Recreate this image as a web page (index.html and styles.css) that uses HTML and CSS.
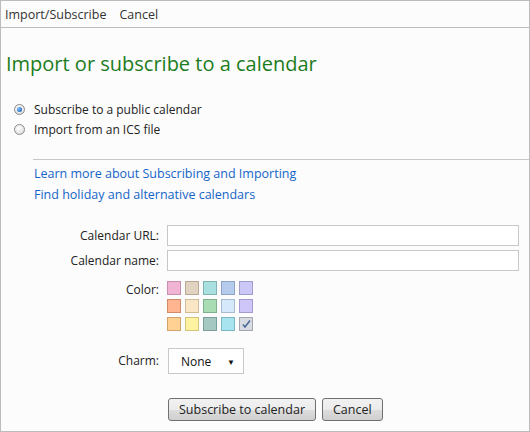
FILE: index.html
```html
<!DOCTYPE html>
<html>
<head>
	<meta charset="UTF-8">
	<title>Import or subscribe to a calendar</title>
	<link rel="stylesheet" href="styles.css">
</head>
<body>
	<div class="frame">
		<div class="toolbar">
			<a class="tool" href="#">Import/Subscribe</a>
			<a class="tool" href="#">Cancel</a>
		</div>

		<h1 class="title">Import or subscribe to a calendar</h1>

		<div class="choices">
			<label class="choice"><span class="radio checked"></span>Subscribe to a public calendar</label>
			<label class="choice"><span class="radio"></span>Import from an ICS file</label>
		</div>

		<div class="links">
			<a href="#">Learn more about Subscribing and Importing</a>
			<a href="#">Find holiday and alternative calendars</a>
		</div>

		<div class="form">
			<div class="lbl">Calendar URL:</div>
			<input class="field" type="text">
			<div class="lbl">Calendar name:</div>
			<input class="field" type="text">
			<div class="lbl lbl-color">Color:</div>
			<div class="swatches">
				<span class="sw" style="background:#f0b4d4;border-color:#c890ac"></span>
				<span class="sw" style="background:#e2d2c0;border-color:#b8a896"></span>
				<span class="sw" style="background:#a8e0e0;border-color:#80b4b4"></span>
				<span class="sw" style="background:#b6cced;border-color:#8ea4c4"></span>
				<span class="sw" style="background:#cbc8f8;border-color:#a09ccc"></span>

				<span class="sw" style="background:#ffb690;border-color:#d08c68"></span>
				<span class="sw" style="background:#f8e6c4;border-color:#cebc9c"></span>
				<span class="sw" style="background:#aadcb4;border-color:#80b08c"></span>
				<span class="sw" style="background:#d6e8fc;border-color:#a8bcd0"></span>
				<span class="sw" style="background:#cec6f8;border-color:#a49cd0"></span>

				<span class="sw" style="background:#ffd294;border-color:#d0a468"></span>
				<span class="sw" style="background:#fff2a0;border-color:#d2c478"></span>
				<span class="sw" style="background:#a6c8c2;border-color:#7c9e98"></span>
				<span class="sw" style="background:#a8e4f0;border-color:#7cb8c4"></span>
				<span class="sw picked" style="background:#d8dce2;border-color:#a4a8ae">
					<svg width="12" height="12" viewBox="0 0 12 12"><path d="M3 6.5 L5 9 L10 2.5" fill="none" stroke="#4a6a9a" stroke-width="1.6"/></svg>
				</span>
			</div>
			<div class="lbl lbl-charm">Charm:</div>
			<div class="charm">
				<div class="select"><span>None</span><span class="arrow">&#9660;</span></div>
			</div>
		</div>

		<div class="actions">
			<button class="btn">Subscribe to calendar</button>
			<button class="btn">Cancel</button>
		</div>
	</div>
</body>
</html>
```

FILE: styles.css
```css
*{
	box-sizing:border-box;
}

body{
	margin:0;
	background:#fff;
	font-family:"Open Sans","Noto Sans",sans-serif;
	font-size:12px;
	color:#222;
}

.frame{
	height:432px;
	border:1px solid #bcbcbc;
	background:#fcfcfc;
}

.toolbar{
	height:27px;
	border-bottom:1px solid #bcbcbc;
	padding-left:4px;
	display:flex;
	align-items:center;
	gap:13px;
	font-size:12.5px;
}

.tool{
	color:#333;
	text-decoration:none;
}

.title{
	margin:22px 0 0 5px;
	font-weight:normal;
	font-size:20px;
	line-height:28px;
	color:#1c7c1c;
}

.choices{
	margin:23px 0 0 13px;
	display:flex;
	flex-direction:column;
	gap:4px;
}

.choice{
	display:flex;
	align-items:center;
	height:16px;
}

.radio{
	width:11px;
	height:11px;
	border-radius:50%;
	border:1px solid #8a8a8a;
	background:radial-gradient(circle at 40% 35%,#fff,#d6d6d6);
	margin-right:9px;
	position:relative;
}

.radio.checked::after{
	content:"";
	position:absolute;
	left:2px;
	top:2px;
	width:5px;
	height:5px;
	border-radius:50%;
	background:radial-gradient(circle at 35% 35%,#7ec0ff,#0d4fa8);
}

.links{
	margin:22px 0 0 32px;
	border-top:1px solid #c8c8c8;
	padding:6px 0 0 1px;
	display:flex;
	flex-direction:column;
	gap:5px;
}

.links a{
	color:#1565c8;
	text-decoration:none;
	line-height:16px;
	font-size:12.5px;
}

.form{
	margin-top:22px;
	display:grid;
	grid-template-columns:158px 1fr;
	column-gap:8px;
	row-gap:4px;
	padding-right:10px;
}

.lbl{
	text-align:right;
	line-height:21px;
}

.field{
	height:21px;
	border:1px solid #c8c8c8;
	background:#fff;
	margin:0;
}

.lbl-color{
	margin-top:4px;
}

.swatches{
	margin-top:6px;
	display:grid;
	grid-template-columns:repeat(5,14px);
	gap:4px;
}

.sw{
	width:14px;
	height:14px;
	border:1px solid;
	display:flex;
	align-items:center;
	justify-content:center;
}

.lbl-charm{
	margin-top:13px;
	line-height:26px;
}

.charm{
	margin-top:13px;
	padding-left:1px;
}

.select{
	width:76px;
	height:26px;
	border:1px solid #c8c8c8;
	background:#fff;
	display:flex;
	align-items:center;
	justify-content:space-between;
	padding:0 8px 0 12px;
	color:#111;
}

.arrow{
	font-size:8px;
}

.actions{
	margin:24px 0 0 167px;
	display:flex;
	gap:6px;
}

.btn{
	font-family:inherit;
	font-size:12.5px;
	color:#222;
	height:23px;
	padding:0 10px;
	border:1px solid #707070;
	border-radius:3px;
	background:linear-gradient(#f2f2f2 0%,#ebebeb 50%,#dddddd 51%,#cfcfcf 100%);
}
```
